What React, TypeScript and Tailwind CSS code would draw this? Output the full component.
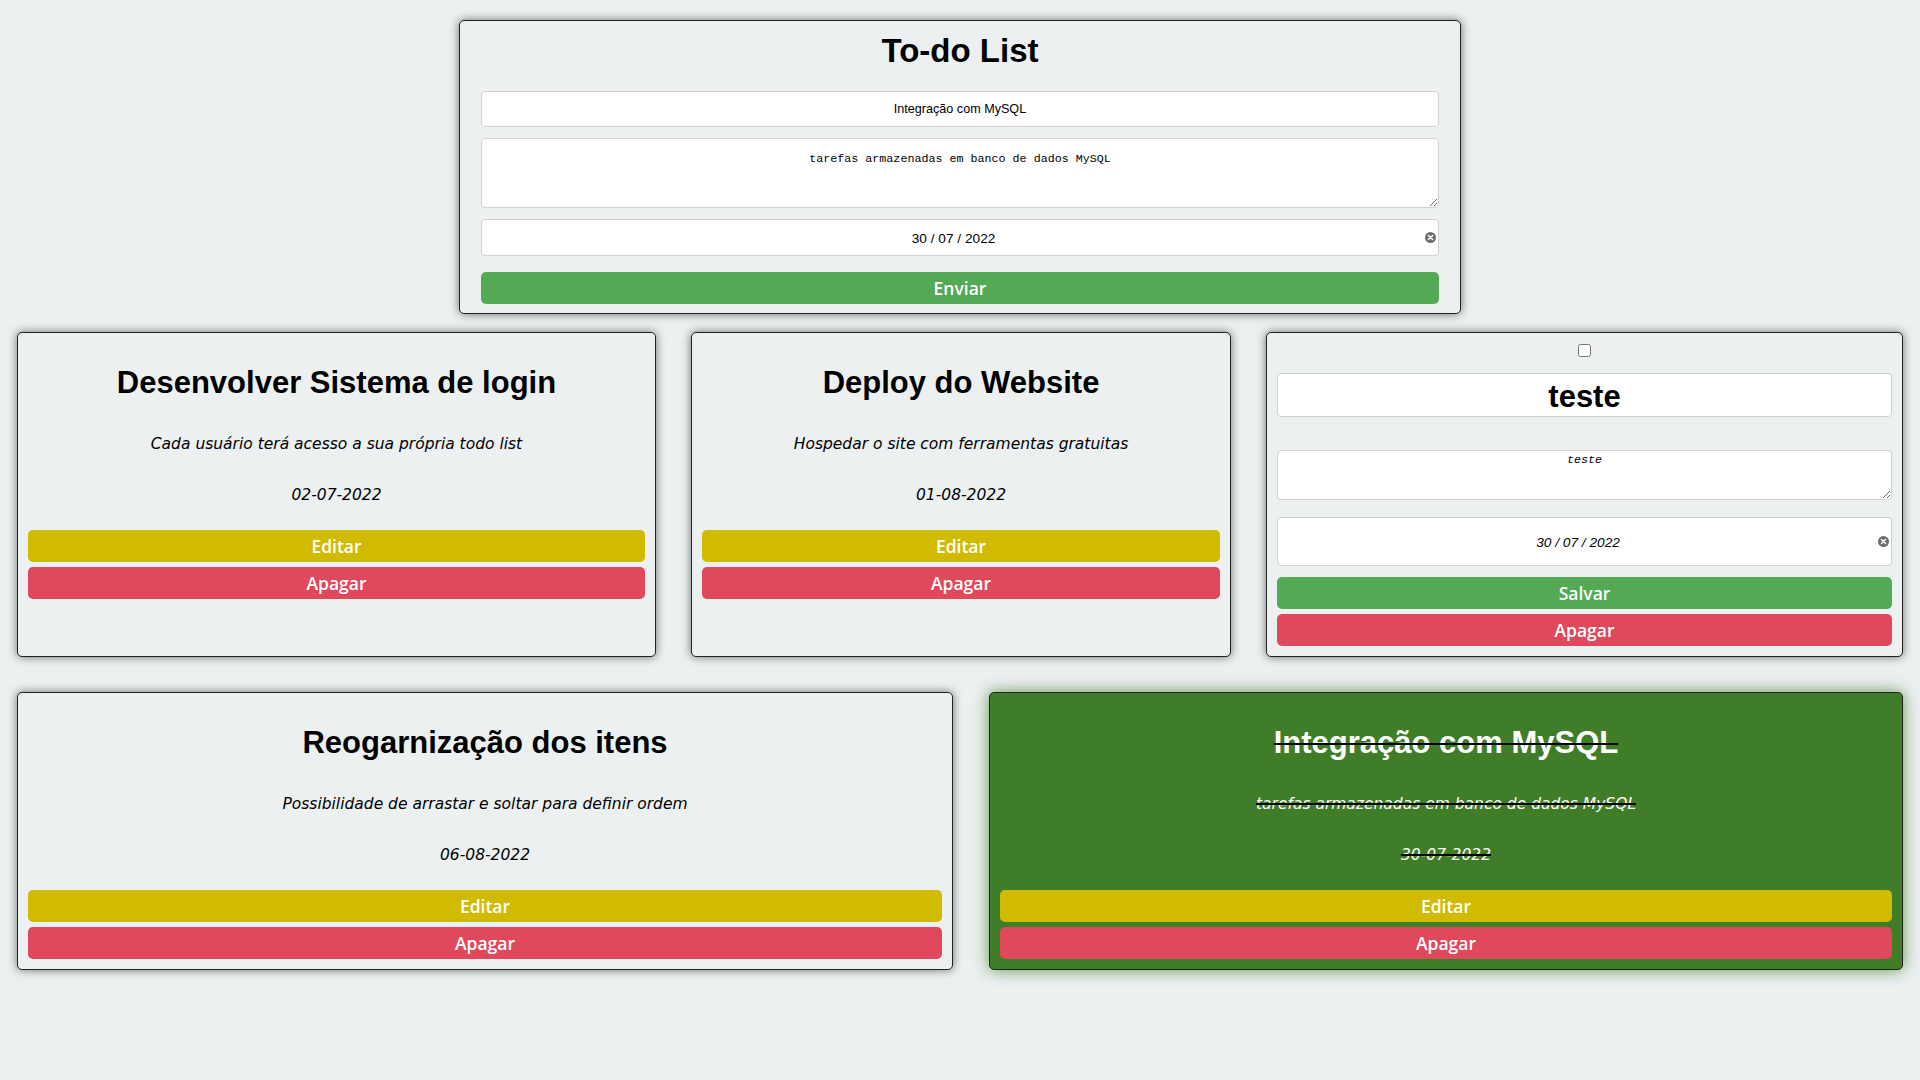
import React from "react";

const SANS = "font-['Liberation_Sans',Arial,sans-serif]";
const BTN = "font-['Open_Sans',Arial,sans-serif]";
const DESC = "font-['DejaVu_Sans',Verdana,sans-serif]";
const MONO = "font-['Liberation_Mono',monospace]";

function ClearIcon() {
  return (
    <svg width="11" height="11" viewBox="0 0 11 11" className="mr-[2px] shrink-0">
      <circle cx="5.5" cy="5.5" r="5.5" fill="#6e6e6e" />
      <path d="M3.4 3.4 L7.6 7.6 M7.6 3.4 L3.4 7.6" stroke="#fff" strokeWidth="1.4" strokeLinecap="round" />
    </svg>
  );
}

type CardProps = {
  title: string;
  desc: string;
  date: string;
  done?: boolean;
  w: string;
};

function TaskCard({ title, desc, date, done, w }: CardProps) {
  const box = done
    ? "bg-[#3f7d28] shadow-[0_0_16px_rgba(63,125,40,0.8)]"
    : "bg-[#ecf0f1] shadow-[0_0_10px_rgba(0,0,0,0.55)]";
  const strike = done ? "text-white line-through decoration-black decoration-2" : "text-black";
  return (
    <div className={`${w} ${box} flex flex-col rounded-[5px] border border-[#222] p-[10px]`}>
      <h2 className={`mt-[22px] text-center text-[31px] font-bold leading-[36px] ${SANS} ${strike}`}>{title}</h2>
      <p className={`mt-[33px] text-center text-[15.5px] italic leading-[20px] ${DESC} ${strike}`}>{desc}</p>
      <p className={`mt-[31px] text-center text-[15.5px] italic leading-[20px] ${DESC} ${strike}`}>{date}</p>
      <button className={`mt-[25px] h-[32px] rounded-[5px] bg-[#d1bb00] text-[17.5px] font-semibold text-white ${BTN}`}>Editar</button>
      <button className={`mt-[5px] h-[32px] rounded-[5px] bg-[#e0485b] text-[17.5px] font-semibold text-white ${BTN}`}>Apagar</button>
    </div>
  );
}

function EditCard() {
  return (
    <div className="flex w-[637px] flex-col rounded-[5px] border border-[#222] bg-[#ecf0f1] p-[10px] shadow-[0_0_10px_rgba(0,0,0,0.55)]">
      <div className="flex h-[14px] justify-center pt-[1px]">
        <input type="checkbox" className="m-0 h-[13px] w-[13px]" readOnly />
      </div>
      <input
        readOnly
        defaultValue="teste"
        className={`mt-[16px] block h-[44px] w-full rounded-[4px] border border-[#d0d0d0] bg-white pt-[5px] text-center text-[31px] font-bold text-black outline-none ${SANS}`}
      />
      <textarea
        readOnly
        defaultValue="teste"
        className={`mt-[33px] block h-[50px] w-full rounded-[4px] border border-[#d0d0d0] bg-white pt-[2px] text-center text-[11.7px] italic leading-[15px] text-black outline-none ${MONO}`}
      />
      <div className="mt-[17px] flex h-[49px] items-center rounded-[4px] border border-[#d0d0d0] bg-white">
        <span className={`flex-1 pt-[3px] text-center text-[13.7px] italic text-black ${SANS}`}>30 / 07 / 2022</span>
        <ClearIcon />
      </div>
      <button className={`mt-[11px] h-[32px] rounded-[5px] bg-[#54a954] text-[17.5px] font-semibold text-white ${BTN}`}>Salvar</button>
      <button className={`mt-[5px] h-[32px] rounded-[5px] bg-[#e0485b] text-[17.5px] font-semibold text-white ${BTN}`}>Apagar</button>
    </div>
  );
}

export default function App() {
  return (
    <div className="min-h-screen bg-[#ecf0f1] pt-[20px]">
      <div className="mx-auto flex w-[1002px] flex-col rounded-[5px] border border-[#222] bg-[#ecf0f1] px-[21px] pt-[10px] pb-[9px] shadow-[0_0_10px_rgba(0,0,0,0.55)]">
        <h1 className={`text-center text-[33px] font-bold leading-[40px] text-black ${SANS}`}>To-do List</h1>
        <input
          readOnly
          defaultValue="Integração com MySQL"
          className={`mt-[20px] block h-[36px] w-full rounded-[4px] border border-[#d0d0d0] bg-white text-center text-[12.6px] text-black outline-none ${SANS}`}
        />
        <textarea
          readOnly
          defaultValue="tarefas armazenadas em banco de dados MySQL"
          className={`mt-[11px] block h-[70px] w-full rounded-[4px] border border-[#d0d0d0] bg-white pt-[13px] text-center text-[11.7px] leading-[15px] text-black outline-none ${MONO}`}
        />
        <div className="mt-[11px] flex h-[37px] items-center rounded-[4px] border border-[#d0d0d0] bg-white">
          <span className={`flex-1 pt-[3px] text-center text-[13.7px] text-black ${SANS}`}>30 / 07 / 2022</span>
          <ClearIcon />
        </div>
        <button className={`mt-[16px] h-[32px] rounded-[5px] bg-[#54a954] text-[17.5px] font-semibold text-white ${BTN}`}>Enviar</button>
      </div>

      <div className="mt-[18px] flex justify-between px-[17px]">
        <TaskCard
          w="w-[639px]"
          title="Desenvolver Sistema de login"
          desc="Cada usuário terá acesso a sua própria todo list"
          date="02-07-2022"
        />
        <TaskCard
          w="w-[540px]"
          title="Deploy do Website"
          desc="Hospedar o site com ferramentas gratuitas"
          date="01-08-2022"
        />
        <EditCard />
      </div>

      <div className="mt-[35px] flex justify-between px-[17px]">
        <TaskCard
          w="w-[936px]"
          title="Reogarnização dos itens"
          desc="Possibilidade de arrastar e soltar para definir ordem"
          date="06-08-2022"
        />
        <TaskCard
          w="w-[914px]"
          title="Integração com MySQL"
          desc="tarefas armazenadas em banco de dados MySQL"
          date="30-07-2022"
          done
        />
      </div>
    </div>
  );
}
